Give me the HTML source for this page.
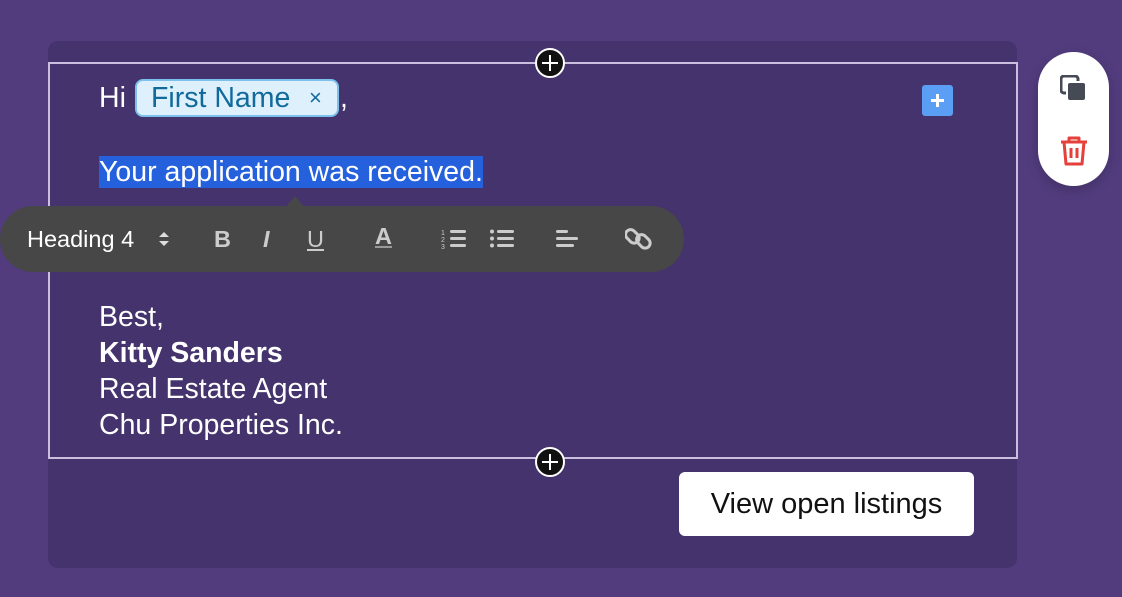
<!DOCTYPE html>
<html><head><style>
body{margin:0;width:1122px;height:597px;background:#523c7e;font-family:"Liberation Sans",Arial,Helvetica,sans-serif;position:relative;overflow:hidden}
.card{position:absolute;left:48px;top:41px;width:969px;height:527px;background:#44336c;border-radius:10px}
.sel{position:absolute;left:48px;top:62px;width:966px;height:393px;border:2px solid #cbbfe0}
.plus{position:absolute;width:30px;height:30px;border-radius:50%;background:#111;border:2px solid #fff;box-sizing:border-box}
.plus:before,.plus:after{content:"";position:absolute;background:#fff;left:50%;top:50%;transform:translate(-50%,-50%)}
.plus:before{width:16px;height:2px}.plus:after{width:2px;height:16px}
.t{position:absolute;color:#fff;font-size:28.5px;left:99px;line-height:32px;white-space:nowrap}
.chip{position:absolute;left:135px;top:79px;width:204px;height:38px;box-sizing:border-box;background:#dff0fd;border:2px solid #7cc0ec;border-radius:8px;color:#116a9a;font-size:28.5px;line-height:34px;padding-left:14px;white-space:nowrap}
.hl{background:#2561dd}
.tb{position:absolute;left:0;top:206px;width:684px;height:66px;background:#474747;border-radius:33px;color:#fff}
.tb span{position:absolute;top:20px;font-size:23.5px}
.btn{position:absolute;left:679px;top:472px;width:295px;height:64px;background:#fff;border-radius:6px;font-size:29px;line-height:64px;text-align:center;color:#111}
.side{position:absolute;left:1038px;top:52px;width:71px;height:134px;background:#fff;border-radius:36px;box-shadow:0 4px 12px rgba(0,0,0,.2)}
</style></head><body>
<div class="card"></div>
<div class="sel"></div>
<div class="plus" style="left:535px;top:48px"></div>
<div class="plus" style="left:535px;top:447px"></div>
<div style="position:absolute;left:922px;top:85px;width:31px;height:31px;background:#5b9ff5;border-radius:3px"><div style="position:absolute;left:9px;top:14px;width:13px;height:3px;background:#fff"></div><div style="position:absolute;left:14px;top:9px;width:3px;height:13px;background:#fff"></div></div>
<div class="t" style="top:82px">Hi</div>
<div class="chip">First Name <span style="position:absolute;left:172px;font-size:22px">×</span></div>
<div class="t" style="top:82px;left:340px">,</div>
<div class="t" style="top:156px"><span class="hl">Your application was received.</span></div>
<div style="position:absolute;left:285px;top:196px;width:0;height:0;border-left:10px solid transparent;border-right:10px solid transparent;border-bottom:12px solid #474747"></div>
<div class="tb">
<span style="left:27px">Heading 4</span>
<svg style="position:absolute;left:158px;top:24px" width="12" height="18"><path d="M1 7L6 2L11 7Z M1 11L6 16L11 11Z" fill="#ddd"/></svg>
<span style="left:214px;color:#ccc;font-weight:bold">B</span>
<span style="left:263px;color:#ccc;font-style:italic;font-weight:bold">I</span>
<span style="left:307px;color:#ccc;text-decoration:underline">U</span>
<span style="left:375px;color:#ccc;font-weight:bold;border-bottom:2px solid #999;line-height:20px">A</span>
<svg style="position:absolute;left:440px;top:20px" width="30" height="26"><g fill="#ccc"><rect x="10" y="4" width="16" height="3" rx="1.5"/><rect x="10" y="11" width="16" height="3" rx="1.5"/><rect x="10" y="18" width="16" height="3" rx="1.5"/></g><text x="1" y="9" font-size="7" fill="#ccc">1</text><text x="1" y="16" font-size="7" fill="#ccc">2</text><text x="1" y="23" font-size="7" fill="#ccc">3</text></svg>
<svg style="position:absolute;left:489px;top:20px" width="28" height="26"><g fill="#ccc"><circle cx="3" cy="5.5" r="2"/><circle cx="3" cy="12.5" r="2"/><circle cx="3" cy="19.5" r="2"/><rect x="8" y="4" width="17" height="3" rx="1.5"/><rect x="8" y="11" width="17" height="3" rx="1.5"/><rect x="8" y="18" width="17" height="3" rx="1.5"/></g></svg>
<svg style="position:absolute;left:555px;top:20px" width="26" height="26"><g fill="#ccc"><rect x="1" y="4" width="12" height="3" rx="1.5"/><rect x="1" y="11" width="22" height="3" rx="1.5"/><rect x="1" y="18" width="18" height="3" rx="1.5"/></g></svg>
<svg style="position:absolute;left:625px;top:19px" width="28" height="28" fill="none" stroke="#ccc" stroke-width="3"><rect x="2" y="4" width="10" height="15" rx="5" transform="rotate(-45 7 11)"/><rect x="13" y="9" width="10" height="15" rx="5" transform="rotate(-45 18 16)"/></svg>
</div>
<div class="t" style="top:301px">Best,</div>
<div class="t" style="top:337px;font-weight:bold">Kitty Sanders</div>
<div class="t" style="top:373px">Real Estate Agent</div>
<div class="t" style="top:409px">Chu Properties Inc.</div>
<div class="btn">View open listings</div>
<div class="side">
<svg style="position:absolute;left:22px;top:23px" width="28" height="28"><rect x="1" y="1" width="17" height="17" rx="3" fill="none" stroke="#454a55" stroke-width="3"/><rect x="7" y="7" width="19" height="19" rx="3" fill="#454a55" stroke="#fff" stroke-width="2"/></svg>
<svg style="position:absolute;left:21px;top:83px" width="30" height="32" fill="none" stroke="#e5403b" stroke-width="3" stroke-linejoin="round"><path d="M2 7h26M10 7V3h10v4M5 7l2 22h16l2-22M12 13v10M18 13v10"/></svg>
</div>
</body></html>
